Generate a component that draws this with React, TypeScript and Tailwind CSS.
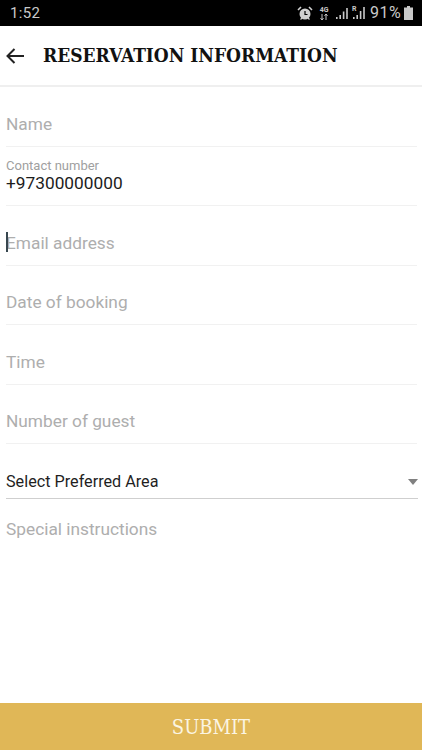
const roboto = "font-['Roboto',sans-serif]";

function Field({ label, caret }: { label: string; caret?: boolean }) {
  return (
    <div className="h-[59.5px] ml-[6px] mr-[5px] border-b border-[#f1f1f1] flex items-center pt-[15px] relative">
      {caret && <span className="absolute left-0 top-[26px] w-[2px] h-[20px] bg-[#37474f]" />}
      <span className="text-[17.3px] leading-[24px] text-[#aeaeae]">{label}</span>
    </div>
  );
}

export default function App() {
  return (
    <div className={`w-[422px] h-[750px] bg-white flex flex-col overflow-hidden ${roboto}`}>
      <div className="h-[26px] bg-black flex items-center justify-between pl-[10px] pr-[9px] text-[#c9c9c9] shrink-0">
        <span className="text-[15px] tracking-[0.3px]">1:52</span>
        <div className="flex items-center">
          <svg width="16" height="15" viewBox="0 0 16 15" className="mr-[5px]">
            <circle cx="8" cy="8" r="5.5" fill="#d0d0d0" />
            <path d="M8 5v3.5h2.5" stroke="#000" strokeWidth="1.2" fill="none" />
            <path d="M1 4l3-3M15 4l-3-3" stroke="#d0d0d0" strokeWidth="1.6" />
            <path d="M3.500 13.500l1.500-1.500M12.500 13.500L11 12" stroke="#d0d0d0" strokeWidth="1.3" />
          </svg>
          <div className="w-[12px] h-[15px] flex flex-col items-center mr-[5px]">
            <span className="text-[7px] leading-[8px] font-bold text-[#c9c9c9]">4G</span>
            <svg width="10" height="6" viewBox="0 0 10 6">
              <path d="M3 0v6M1.500 4.200L3 6l1.500-1.800M7 6V0M5.500 1.800L7 0l1.500 1.800" stroke="#c9c9c9" strokeWidth="1" fill="none" />
            </svg>
          </div>
          <svg width="14" height="13" viewBox="0 0 14 13" className="mr-[3px]">
            <path d="M1 10h1.600v2H1zM4.400 8H6v4H4.400zM7.800 4.500h1.600V12H7.800zM11.200 1h1.600v11h-1.600z" fill="#c9c9c9" />
          </svg>
          <div className="relative w-[14px] h-[14px] mr-[4px]">
            <span className="absolute left-0 top-[-1px] text-[7px] leading-[8px] font-bold text-[#c9c9c9]">R</span>
            <svg width="14" height="14" viewBox="0 0 14 14" className="absolute left-0 top-0">
              <path d="M1 11h1.600v2H1zM4.400 9H6v4H4.400zM7.800 5h1.600v8H7.800zM11.200 1h1.600v12h-1.600z" fill="#c9c9c9" />
            </svg>
          </div>
          <span className="text-[16px] leading-[20px] tracking-[0.4px] mr-[3px]">91%</span>
          <svg width="9" height="14" viewBox="0 0 9 14">
            <path d="M3 0h3v1.500h3V14H0V1.500h3z" fill="#c9c9c9" />
          </svg>
        </div>
      </div>

      <div className="h-[61px] border-b-2 border-[#efefef] flex items-center pl-[6px] shrink-0">
        <svg width="18" height="16" viewBox="0 0 18 16" className="shrink-0 mt-[1px]">
          <path d="M18 8H1.800M8.500 1L1.500 8l7 7" stroke="#222" strokeWidth="2" fill="none" />
        </svg>
        <span className="ml-[19px] font-['DejaVu_Serif',serif] [font-stretch:condensed] font-bold text-[19px] leading-[24px] text-[#111] whitespace-nowrap mt-[-2px]">
          RESERVATION INFORMATION
        </span>
      </div>

      <Field label="Name" />
      <div className="h-[59.5px] ml-[6px] mr-[5px] border-b border-[#f1f1f1] flex flex-col justify-end pb-[12px]">
        <span className="text-[13px] leading-[14px] text-[#a0a0a0]">Contact number</span>
        <span className="text-[17.3px] leading-[20px] text-[#1c1c1c]">+97300000000</span>
      </div>
      <Field label="Email address" caret />
      <Field label="Date of booking" />
      <Field label="Time" />
      <Field label="Number of guest" />

      <div className="mt-[23px] ml-[6px] mr-[4px] h-[32px] border-b border-[#cfcfcf] flex items-start justify-between">
        <span className="text-[16.2px] leading-[30px] text-[#1f1f1f]">Select Preferred Area</span>
        <span className="mt-[12px] w-0 h-0 border-x-[5.5px] border-x-transparent border-t-[6px] border-t-[#808080]" />
      </div>
      <div className="mx-[6px] mt-[18px] text-[17.3px] leading-[24px] text-[#aeaeae]">Special instructions</div>

      <div className="flex-1" />
      <div className="h-[47px] bg-[#e0b757] flex items-center justify-center shrink-0">
        <span className="font-['DejaVu_Serif',serif] [font-stretch:condensed] text-[20px] text-[#fbf5e3]">SUBMIT</span>
      </div>
    </div>
  );
}
